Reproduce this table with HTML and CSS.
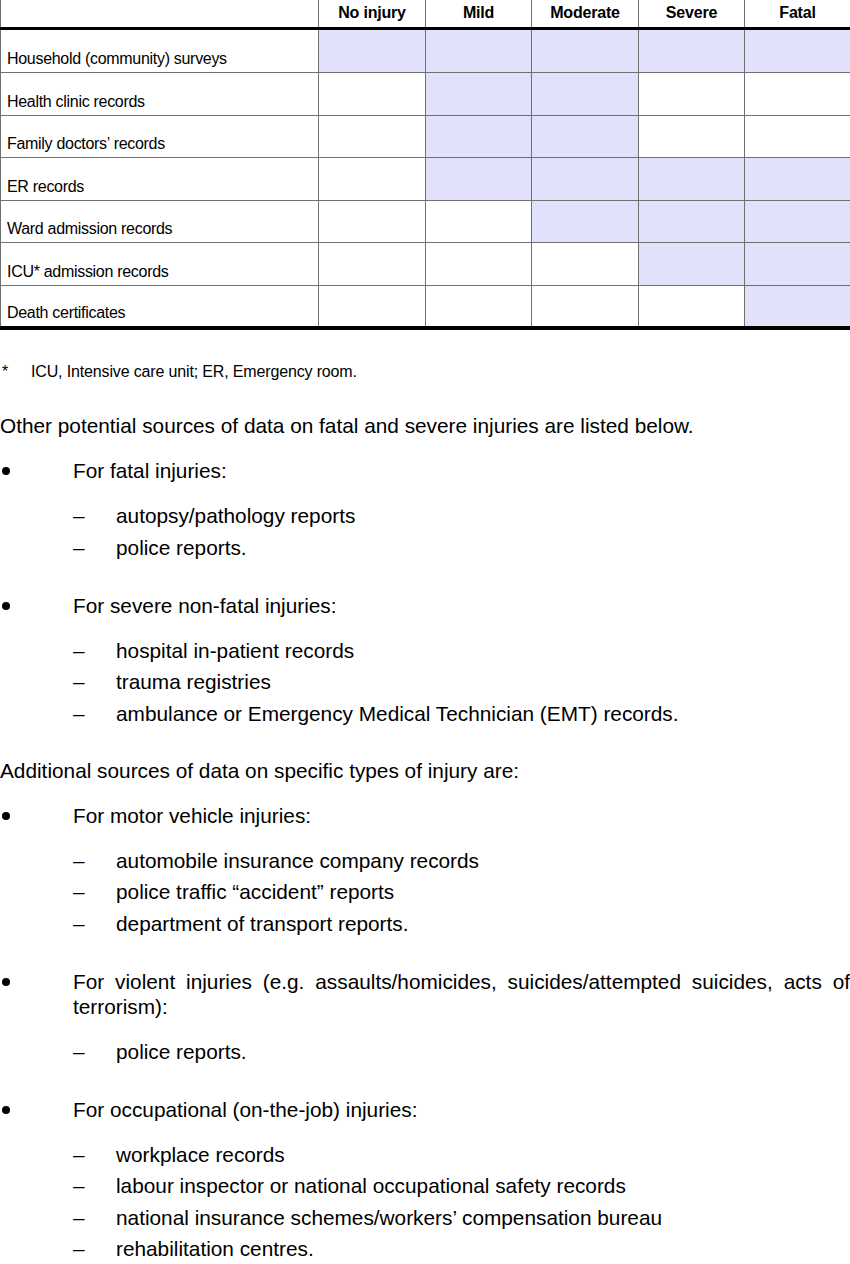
FILE: index.html
```html
<!DOCTYPE html>
<html lang="en">
<head>
<meta charset="utf-8">
<title>Sources of injury data</title>
<link rel="stylesheet" href="styles.css">
</head>
<body>
<table class="matrix">
  <colgroup>
    <col class="c-src"><col class="c-lvl"><col class="c-lvl2"><col class="c-lvl"><col class="c-lvl2"><col class="c-lvl2">
  </colgroup>
  <thead>
    <tr><th></th><th>No injury</th><th>Mild</th><th>Moderate</th><th>Severe</th><th>Fatal</th></tr>
  </thead>
  <tbody>
    <tr class="first"><td>Household (community) surveys</td><td class="on"></td><td class="on"></td><td class="on"></td><td class="on"></td><td class="on"></td></tr>
    <tr><td>Health clinic records</td><td></td><td class="on"></td><td class="on"></td><td></td><td></td></tr>
    <tr><td>Family doctors’ records</td><td></td><td class="on"></td><td class="on"></td><td></td><td></td></tr>
    <tr><td>ER records</td><td></td><td class="on"></td><td class="on"></td><td class="on"></td><td class="on"></td></tr>
    <tr><td>Ward admission records</td><td></td><td></td><td class="on"></td><td class="on"></td><td class="on"></td></tr>
    <tr><td>ICU* admission records</td><td></td><td></td><td></td><td class="on"></td><td class="on"></td></tr>
    <tr><td>Death certificates</td><td></td><td></td><td></td><td></td><td class="on"></td></tr>
  </tbody>
</table>

<p class="note"><span class="mark">*</span><span>ICU, Intensive care unit; ER, Emergency room.</span></p>

<p class="para">Other potential sources of data on fatal and severe injuries are listed below.</p>
<ul class="bullets">
  <li>
    <p class="lead">For fatal injuries:</p>
    <ul class="dashes">
      <li>autopsy/pathology reports</li>
      <li>police reports.</li>
    </ul>
  </li>
  <li>
    <p class="lead">For severe non-fatal injuries:</p>
    <ul class="dashes">
      <li>hospital in-patient records</li>
      <li>trauma registries</li>
      <li>ambulance or Emergency Medical Technician (EMT) records.</li>
    </ul>
  </li>
</ul>

<p class="para">Additional sources of data on specific types of injury are:</p>
<ul class="bullets">
  <li>
    <p class="lead">For motor vehicle injuries:</p>
    <ul class="dashes">
      <li>automobile insurance company records</li>
      <li>police traffic “accident” reports</li>
      <li>department of transport reports.</li>
    </ul>
  </li>
  <li>
    <p class="lead just">For violent injuries (e.g. assaults/homicides, suicides/attempted suicides, acts of terrorism):</p>
    <ul class="dashes">
      <li>police reports.</li>
    </ul>
  </li>
  <li>
    <p class="lead">For occupational (on-the-job) injuries:</p>
    <ul class="dashes">
      <li>workplace records</li>
      <li>labour inspector or national occupational safety records</li>
      <li>national insurance schemes/workers’ compensation bureau</li>
      <li>rehabilitation centres.</li>
    </ul>
  </li>
</ul>
</body>
</html>
```

FILE: styles.css
```css
html, body {
  margin: 0;
  padding: 0;
  background: #ffffff;
}

body {
  width: 850px;
  font-family: "Liberation Sans", Arial, sans-serif;
  color: #000000;
  font-size: 20.8px;
  line-height: 25px;
}

/* ---------- table ---------- */
.matrix {
  width: 850px;
  border-collapse: collapse;
  table-layout: fixed;
  font-size: 16px;
  line-height: 18px;
}

.c-src { width: 318px; }
.c-lvl { width: 107px; }
.c-lvl2 { width: 106px; }

.matrix th,
.matrix td {
  border: 1px solid #707070;
  padding: 0;
}

.matrix thead tr { height: 28px; }

.matrix th {
  font-weight: bold;
  text-align: center;
  vertical-align: middle;
  border-top: none;
  border-bottom: 3px solid #000000;
  letter-spacing: -0.2px;
}

.matrix tbody tr { height: 42.6px; }
.matrix tbody tr.first { height: 44.6px; }

.matrix td {
  vertical-align: bottom;
  padding: 0 0 4px 6px;
  letter-spacing: -0.3px;
  white-space: nowrap;
}

.matrix tbody tr:last-child td {
  border-bottom: 4px solid #000000;
}

.matrix td.on {
  background: #e1e1fb;
}

/* ---------- footnote ---------- */
.note {
  margin: 32px 0 0 0;
  display: grid;
  grid-template-columns: 31px 1fr;
  font-size: 16px;
  line-height: 20px;
  letter-spacing: -0.15px;
}

.mark {
  padding-left: 2px;
}

/* ---------- body text ---------- */
.para {
  margin: 31px 0 0 0;
}

.bullets + .para {
  margin-top: 32px;
}

.bullets {
  list-style: none;
  margin: 20px 0 0 0;
  padding: 0;
}

.bullets > li {
  position: relative;
  padding-left: 73px;
  margin-bottom: 33px;
}

.bullets > li:last-child {
  margin-bottom: 0;
}

.bullets > li::before {
  content: "";
  position: absolute;
  left: 2px;
  top: 9px;
  width: 8px;
  height: 8px;
  border-radius: 50%;
  background: #000000;
}

.lead {
  margin: 0;
}

.just {
  text-align: justify;
}

.dashes {
  list-style: none;
  margin: 20px 0 0 0;
  padding: 0;
}

.dashes > li {
  position: relative;
  padding-left: 43px;
  margin-top: 6.5px;
}

.dashes > li:first-child {
  margin-top: 0;
}

.dashes > li::before {
  content: "\2013";
  position: absolute;
  left: 0;
  top: 0;
}
```
